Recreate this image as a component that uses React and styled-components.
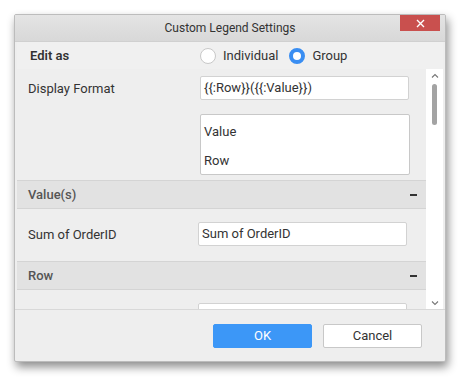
import React from "react";
import styled, { createGlobalStyle } from "styled-components";

const GlobalStyle = createGlobalStyle`
  html, body {
    margin: 0;
    background: #ffffff;
    font-family: Roboto, "Liberation Sans", sans-serif;
  }
`;

function App() {
  return (
    <>
      <GlobalStyle />
      <Page>
        <Dialog>
          <TitleBar>
            <Title>Custom Legend Settings</Title>
            <CloseButton>
              <svg width="9" height="9" viewBox="0 0 9 9">
                <path d="M1 1L8 8M8 1L1 8" stroke="#ffffff" strokeWidth="1.4" />
              </svg>
            </CloseButton>
          </TitleBar>

          <EditRow>
            <Label $bold>Edit as</Label>
            <RadioGroup>
              <RadioItem>
                <Radio />
                Individual
              </RadioItem>
              <RadioItem>
                <Radio $checked />
                Group
              </RadioItem>
            </RadioGroup>
          </EditRow>

          <Body>
            <ScrollArea>
              <FieldRow $top={7} $bottom={14}>
                <Label>Display Format</Label>
                <Input $left={201}>{"{{:Row}}({{:Value}})"}</Input>
              </FieldRow>
              <ListRow>
                <ListBox>
                  <ListItem>Value</ListItem>
                  <ListItem>Row</ListItem>
                </ListBox>
              </ListRow>

              <SectionHeader>
                Value(s)
                <Minus />
              </SectionHeader>
              <FieldRow $top={13} $bottom={15}>
                <Label>Sum of OrderID</Label>
                <Input $left={199}>Sum of OrderID</Input>
              </FieldRow>

              <SectionHeader>
                Row
                <Minus />
              </SectionHeader>
              <FieldRow $top={13} $bottom={14}>
                <Label></Label>
                <Input $left={199}></Input>
              </FieldRow>
            </ScrollArea>

            <ScrollBar>
              <Caret>
                <svg width="8" height="5" viewBox="0 0 8 5">
                  <path d="M1 4.5L4 1.5L7 4.5" stroke="#777" strokeWidth="1.1" fill="none" />
                </svg>
              </Caret>
              <Track>
                <Thumb />
              </Track>
              <Caret>
                <svg width="8" height="5" viewBox="0 0 8 5">
                  <path d="M1 0.5L4 3.5L7 0.5" stroke="#777" strokeWidth="1.1" fill="none" />
                </svg>
              </Caret>
            </ScrollBar>
          </Body>

          <Footer>
            <Button $primary>OK</Button>
            <Button>Cancel</Button>
          </Footer>
        </Dialog>
      </Page>
    </>
  );
}

const Page = styled.div`
  width: 467px;
  height: 383px;
  box-sizing: border-box;
  padding: 14px 0 0 14px;
  background: #ffffff;
`;
const Dialog = styled.div`
  width: 432px;
  height: 348px;
  box-sizing: border-box;
  border: 1px solid #bcbcbc;
  border-radius: 2px;
  background: #eeeeee;
  display: flex;
  flex-direction: column;
  box-shadow: 2px 5px 10px rgba(0, 0, 0, 0.45);
  overflow: hidden;
`;
const TitleBar = styled.div`
  height: 26px;
  flex-shrink: 0;
  display: grid;
  grid-template-columns: 1fr auto 1fr;
  align-items: start;
  background: linear-gradient(#e4e4e4, #d8d8d8);
  border-bottom: 1px solid #d0d0d0;
`;
const Title = styled.div`
  grid-column: 2;
  font-size: 12px;
  color: #333333;
  line-height: 26px;
`;
const CloseButton = styled.div`
  grid-column: 3;
  justify-self: end;
  margin: 0 5px 0 0;
  width: 40px;
  height: 16px;
  background: #c9504e;
  display: flex;
  align-items: center;
  justify-content: center;
`;
const EditRow = styled.div`
  height: 27px;
  flex-shrink: 0;
  display: flex;
  align-items: center;
  margin: 0 2px;
  padding-left: 13px;
  background: #f0f0f0;
`;
const Label = styled.div`
  width: 170px;
  font-size: 13px;
  font-weight: ${(p) => (p.$bold ? 600 : 400)};
  color: #333333;
`;
const RadioGroup = styled.div`
  display: flex;
  align-items: center;
  gap: 11px;
`;
const RadioItem = styled.div`
  display: flex;
  align-items: center;
  gap: 7px;
  font-size: 13px;
  color: #333333;
`;
const Radio = styled.span`
  width: 16px;
  height: 16px;
  box-sizing: border-box;
  border-radius: 50%;
  background: #ffffff;
  border: ${(p) => (p.$checked ? "4px solid #3a8ef2" : "1px solid #c8c8c8")};
`;
const Body = styled.div`
  flex: 1;
  min-height: 0;
  display: flex;
  padding: 0 2px;
  border-bottom: 1px solid #d8d8d8;
`;
const ScrollArea = styled.div`
  flex: 1;
  overflow: hidden;
  background: #eeeeee;
`;
const FieldRow = styled.div`
  display: flex;
  align-items: center;
  padding: ${(p) => p.$top}px 0 ${(p) => p.$bottom}px 11px;
`;
const Input = styled.div`
  margin-left: ${(p) => p.$left - 18 - 11 - 170}px;
  width: 209px;
  height: 24px;
  box-sizing: border-box;
  border: 1px solid #d2d2d2;
  border-radius: 2px;
  background: #ffffff;
  padding: 0 3px;
  font-size: 13px;
  color: #333333;
  line-height: 22px;
`;
const ListRow = styled.div`
  padding: 0 0 5px 183px;
`;
const ListBox = styled.div`
  width: 210px;
  height: 61px;
  box-sizing: border-box;
  border: 1px solid #c8c8c8;
  border-radius: 2px;
  background: #ffffff;
  padding-top: 2px;
`;
const ListItem = styled.div`
  font-size: 13px;
  color: #333333;
  padding-left: 3px;
  line-height: 29px;
`;
const SectionHeader = styled.div`
  height: 27px;
  display: flex;
  align-items: center;
  justify-content: space-between;
  padding: 0 9px 0 11px;
  background: #e2e2e2;
  border-top: 1px solid #d4d4d4;
  border-bottom: 1px solid #d4d4d4;
  font-size: 13px;
  font-weight: 500;
  color: #555555;
`;
const Minus = styled.span`
  width: 7px;
  height: 2px;
  background: #333333;
`;
const ScrollBar = styled.div`
  width: 17px;
  background: #ffffff;
  display: flex;
  flex-direction: column;
  align-items: center;
`;
const Caret = styled.div`
  height: 12px;
  display: flex;
  align-items: center;
  justify-content: center;
  padding-left: 1px;
`;
const Track = styled.div`
  flex: 1;
  display: flex;
  flex-direction: column;
  align-items: center;
  padding-top: 3px;
`;
const Thumb = styled.div`
  width: 5px;
  height: 41px;
  border-radius: 3px;
  background: #a3a3a3;
`;
const Footer = styled.div`
  flex-shrink: 0;
  height: 51px;
  display: flex;
  align-items: center;
  justify-content: flex-end;
  gap: 11px;
  padding: 0 23px 0 0;
`;
const Button = styled.div`
  width: 99px;
  height: 24px;
  box-sizing: border-box;
  border-radius: 2px;
  display: flex;
  align-items: center;
  justify-content: center;
  font-size: 13px;
  color: ${(p) => (p.$primary ? "#ffffff" : "#333333")};
  background: ${(p) => (p.$primary ? "#3c97f7" : "#ffffff")};
  border: 1px solid ${(p) => (p.$primary ? "#3c97f7" : "#c8c8c8")};
`;

export default App;
